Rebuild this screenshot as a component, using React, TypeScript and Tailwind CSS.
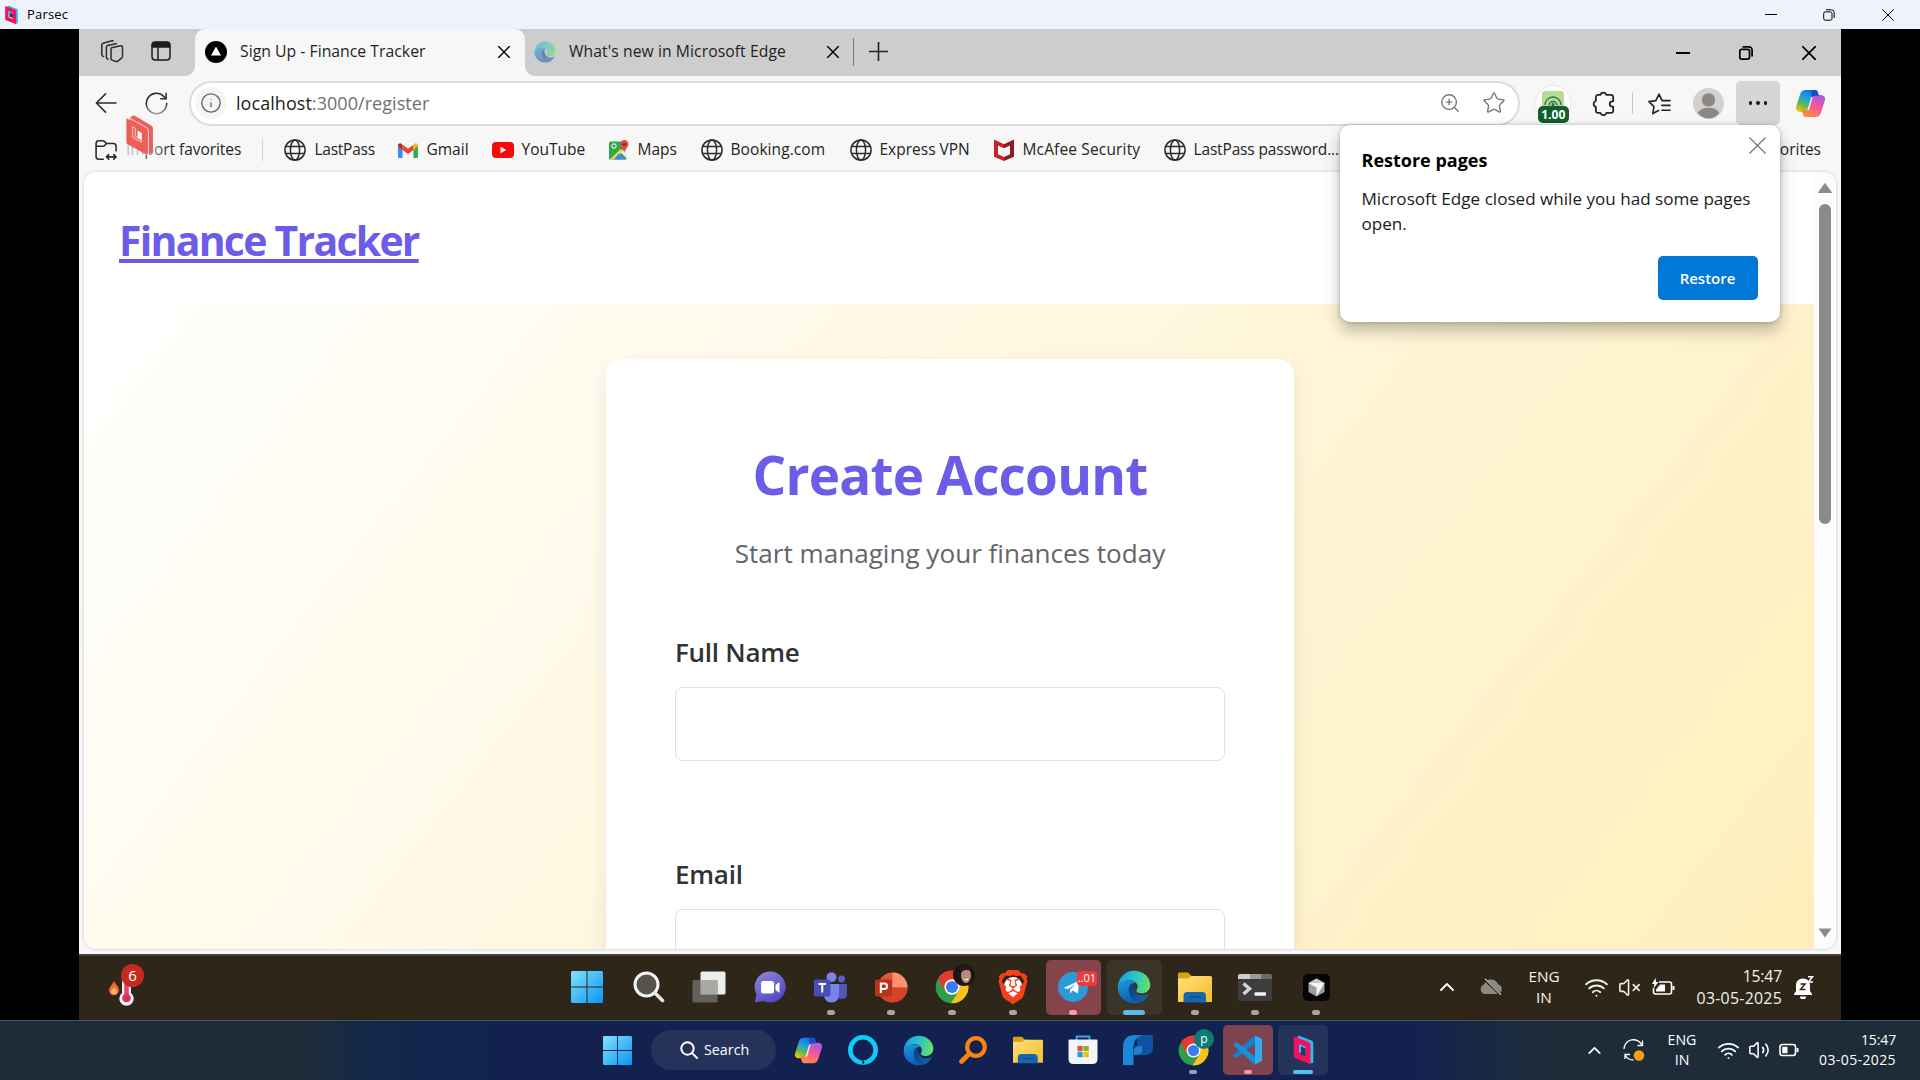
import React from 'react';
import { ChevronUp, Info, Star, Volume2, VolumeX, Wifi, ZoomIn } from 'lucide-react';
import { SiBrave } from 'react-icons/si';

type IconProps = { className?: string };

/* ---------- small line icons ---------- */

const Close = ({ className = '' }: IconProps) => (
  <svg viewBox="0 0 12 12" className={className} fill="none" stroke="currentColor" strokeLinecap="round">
    <path d="M.6.6l10.8 10.8M11.4.6L.6 11.4" />
  </svg>
);

const RestoreWindow = ({ className = '' }: IconProps) => (
  <svg viewBox="0 0 12 12" className={className} fill="none" stroke="currentColor">
    <rect x=".7" y="2.9" width="8.3" height="8.3" rx="1.6" />
    <path d="M3 .8h5.4a2.8 2.8 0 0 1 2.8 2.8V9" />
  </svg>
);

const Globe = ({ className = '' }: IconProps) => (
  <svg viewBox="0 0 24 24" className={className} fill="none" stroke="#2a2a2a" strokeWidth="1.6">
    <circle cx="12" cy="12" r="11" />
    <ellipse cx="12" cy="12" rx="5" ry="11" />
    <path d="M2 8.2h20M2 15.8h20" />
  </svg>
);

const Workspaces = ({ className = '' }: IconProps) => (
  <svg viewBox="0 0 24 24" className={className} fill="none" stroke="#2c2c2c" strokeWidth="1.5" strokeLinejoin="round">
    <path d="M11 10.2c0-.9.5-1.4 1.3-1.6l8.5-1.8c1-.2 1.7.4 1.7 1.4v9.2c0 .8-.3 1.3-1 1.8l-4 3.1c-.4.3-.9.4-1.4.2l-4-1.4c-.7-.3-1.1-.8-1.1-1.6z" />
    <path d="M8.5 20.5l-1.2-.6c-.6-.3-.9-.8-.9-1.5V8.200c0-.9.5-1.400 1.300-1.600l9.300-2.200" />
    <path d="M4 17.800l-1.300-.7c-.6-.3-.9-.8-.9-1.500V5.900c0-.9.500-1.400 1.300-1.600L12 1.800c.7-.2 1.200 0 1.500.5" />
  </svg>
);

const VerticalTabs = ({ className = '' }: IconProps) => (
  <svg viewBox="0 0 20 20" className={className} fill="none" stroke="#1d1d1d" strokeWidth="1.5">
    <rect x="1" y="1" width="18" height="18" rx="3.200" />
    <path d="M1.500 3.500Q1.500 1.500 4 1.500h12q2.500 0 2.500 2V6h-17z" fill="#1d1d1d" />
    <path d="M7 6v13" />
  </svg>
);

const Refresh = ({ className = '' }: IconProps) => (
  <svg viewBox="0 0 24 24" className={className} fill="none" strokeWidth="1.6" strokeLinecap="round">
    <defs>
      <linearGradient id="rfG" gradientUnits="userSpaceOnUse" x1="0" y1="0" x2="0" y2="24">
        <stop offset=".5" stopColor="#2d2d2d" />
        <stop offset="1" stopColor="#a8a8a8" />
      </linearGradient>
    </defs>
    <path d="M22.600 12a10.600 10.600 0 1 1-2.900-7.300l1.800 2" stroke="url(#rfG)" />
    <path d="M22 1.400v5.600h-5.600" stroke="#2d2d2d" />
  </svg>
);

const BackArrow = ({ className = '' }: IconProps) => (
  <svg viewBox="0 0 24 24" className={className} fill="none" stroke="#2d2d2d" strokeWidth="1.700" strokeLinecap="round" strokeLinejoin="round">
    <path d="M23 12H1.500M11.500 2L1.500 12l10 10" />
  </svg>
);

const ImportFolder = ({ className = '' }: IconProps) => (
  <svg viewBox="0 0 24 24" className={className} fill="none" stroke="#2a2a2a" strokeWidth="1.7" strokeLinecap="round" strokeLinejoin="round">
    <path d="M9 22H4.200A3 3 0 0 1 1.200 19V5a3 3 0 0 1 3-3h4.300c.8 0 1.500.3 2 .9L12.500 5H20a3 3 0 0 1 3 3v5" />
    <path d="M1.200 8h7.300c.8 0 1.500-.3 2-.9L12.500 5" />
    <path d="M12.500 19.500h10.500M15 17l-2.500 2.500L15 22M20.500 17l2.500 2.500-2.500 2.500" />
  </svg>
);

const PuzzlePiece = ({ className = '' }: IconProps) => (
  <svg viewBox="0 0 24 24" className={className} fill="none" stroke="#242424" strokeWidth="1.700" strokeLinejoin="round">
    <path d="M6.500 3.800H9a3 3 0 0 1 5.800 0h4.700a1.800 1.800 0 0 1 1.800 1.800v4.300h-.8a2.500 2.500 0 0 0 0 5h.8v4.300a1.800 1.800 0 0 1-1.800 1.800h-4.700a3 3 0 0 1-5.800 0H6.500a1.800 1.800 0 0 1-1.800-1.800v-4a2.900 2.900 0 0 1 0-5.600v-4a1.800 1.800 0 0 1 1.800-1.800z" />
  </svg>
);

const FavoritesList = ({ className = '' }: IconProps) => (
  <svg viewBox="0 0 24 24" className={className} fill="none" stroke="#242424" strokeWidth="1.700" strokeLinecap="round" strokeLinejoin="round">
    <path d="M11 19.300L5 22.500l1.200-7.300L1 10l7.200-1 3.300-6.800L14.700 9H23M14.500 14H23M14.500 19H23" />
  </svg>
);

/* ---------- coloured logos ---------- */

const Copilot = ({ className = '' }: IconProps) => (
  <svg viewBox="0 0 24 24" className={className}>
    <defs>
      <linearGradient id="cpA" x1=".7" y1="0" x2=".2" y2="1">
        <stop offset="0" stopColor="#1766dc" />
        <stop offset=".35" stopColor="#1a9be8" />
        <stop offset=".65" stopColor="#4fb860" />
        <stop offset="1" stopColor="#f0c500" />
      </linearGradient>
      <linearGradient id="cpB" x1=".8" y1="0" x2=".3" y2="1">
        <stop offset="0" stopColor="#a35be8" />
        <stop offset=".45" stopColor="#f0569a" />
        <stop offset="1" stopColor="#ff8a45" />
      </linearGradient>
    </defs>
    <path d="M8 1.500h7.500c1.200 0 1.900.7 2.200 1.800l1 3.700h-3c-1.400 0-2.200.8-2.600 2l-2.200 7.500c-.4 1.200-1.200 2-2.600 2H4.500C2 18.500.2 16.800.8 14.600L4.100 4.400C4.700 2.500 6.300 1.500 8 1.500z" fill="url(#cpA)" />
    <path d="M16 22.500H8.500c-1.200 0-1.900-.7-2.200-1.800l-1-3.700h3c1.400 0 2.200-.8 2.600-2l2.200-7.500c.4-1.200 1.200-2 2.600-2h3.800c2.500 0 4.300 1.700 3.700 3.900l-3.300 10.200c-.6 1.900-2.200 2.900-3.900 2.900z" fill="url(#cpB)" />
    <path d="M12.700 1.500h2.800c1.200 0 1.900.7 2.200 1.800L18.400 6h-2.900c-1.500 0-2.300.8-2.700 2z" fill="#154fc4" />
    <path d="M13.700 7L11 16.500q-.4 1.200-1.600 1.200L12.500 7z" fill="#fff" opacity=".85" />
  </svg>
);

const EdgeLogo = ({ className = '' }: IconProps) => (
  <svg viewBox="0 0 24 24" className={className}>
    <defs>
      <linearGradient id="edA" x1="0" y1=".4" x2="1" y2=".6">
        <stop offset="0" stopColor="#1b9fe0" />
        <stop offset=".5" stopColor="#2cc3c9" />
        <stop offset="1" stopColor="#66e35c" />
      </linearGradient>
      <linearGradient id="edB" x1="0" y1="0" x2=".4" y2="1">
        <stop offset="0" stopColor="#1c9bdf" />
        <stop offset="1" stopColor="#0c5eb4" />
      </linearGradient>
      <linearGradient id="edC" x1="0" y1=".3" x2="1" y2=".8">
        <stop offset="0" stopColor="#0d3f7d" />
        <stop offset="1" stopColor="#1766b5" />
      </linearGradient>
    </defs>
    <path d="M.6 12C.9 5.500 5.600.5 12 .5c6.800 0 11.500 4.800 11.500 10 0 3.500-2.700 5.900-6.200 5.900-2.200 0-3.600-.9-3.600-1.800 0-.6.900-1 .9-2.700 0-2.600-2.400-4.700-5.500-4.700C5.500 7.200 1.800 9 .6 12z" fill="url(#edA)" />
    <path d="M.5 12.200C1.200 9 4.600 7.200 8.600 7.200c2.100 0 3.800.7 4.900 1.800C10.500 9.300 8.600 11.200 8.600 14c0 4.200 3 7.500 6.800 8.900-1 .4-2.200.6-3.400.6C5.700 23.500.5 18.500.5 12.200z" fill="url(#edB)" />
    <path d="M8.300 14c0-2.300 1.300-4.300 3.300-5-.8 5 2.200 9 6.600 9 1.500 0 2.600-.4 3.600-1 .4-.2.700.1.500.5C20.500 20.600 18 23 15 23.100 11 22.500 8.300 18 8.300 14z" fill="url(#edC)" />
  </svg>
);

const ChromeLogo = ({ className = '' }: IconProps) => (
  <svg viewBox="0 0 24 24" className={className}>
    <circle cx="12" cy="12" r="11.500" fill="#2f9e4b" />
    <path d="M2 6.300a11.500 11.500 0 0 1 20.400.6H12l-5 7.600z" fill="#e33b2e" />
    <path d="M22.400 6.900A11.500 11.500 0 0 1 11.300 23.500L17 14.500 12 6.900z" fill="#fbc116" />
    <circle cx="12" cy="12" r="5.400" fill="#fff" />
    <circle cx="12" cy="12" r="4.300" fill="#3b7ded" />
  </svg>
);

const WindowsLogo = ({ className = '' }: IconProps) => (
  <svg viewBox="0 0 32 32" className={className}>
    <defs>
      <linearGradient id="winG" gradientUnits="userSpaceOnUse" x1="0" y1="0" x2="32" y2="32">
        <stop offset="0" stopColor="#7fe3fd" />
        <stop offset="1" stopColor="#0c93f5" />
      </linearGradient>
    </defs>
    <path d="M1.500 0H15.500V15.500H0V1.500Q0 0 1.500 0zM16.500 0H30.500Q32 0 32 1.500V15.500H16.500zM0 16.500H15.500V32H1.500Q0 32 0 30.500zM16.500 16.500H32V30.500Q32 32 30.500 32H16.500z" fill="url(#winG)" />
  </svg>
);

const Folder = ({ className = '' }: IconProps) => (
  <svg viewBox="0 0 34 31" className={className}>
    <defs>
      <linearGradient id="foG" x1="0" y1="0" x2="1" y2="1">
        <stop offset="0" stopColor="#ffe07a" />
        <stop offset="1" stopColor="#f5bd2b" />
      </linearGradient>
    </defs>
    <path d="M0 2Q0 .5 1.500.5H10l3.500 3.500H20v6H0z" fill="#dfa111" />
    <path d="M0 6.500h10L13.500 4H32.500Q34 4 34 5.500V30H0z" fill="url(#foG)" />
    <path d="M5.500 30.500V24q0-4 4-4h14.500q4 0 4 4v6.500z" fill="#1667b0" />
    <path d="M11 25h12" stroke="#0e4c87" strokeWidth="1.500" />
  </svg>
);

const ParsecMark = ({ className = '' }: IconProps) => (
  <svg viewBox="0 0 20 30" className={className}>
    <path d="M5 .5L18 5.500Q19.800 6.200 19.800 8V27.500L17 28.500 3 4z" fill="#35b8f0" />
    <path d="M1.500 1.700L15 7Q17 8 17 9.800V29.300L2 23.200Q.3 22.500.3 20.700V2.500Q.3 1.300 1.500 1.700zM5.500 9V18.500L12 21.300V12z" fill="#fb0d5c" fillRule="evenodd" />
    <path d="M5.500 9v9.500l2-1V12l4.500 2v-2z" fill="#35b8f0" />
    <path d="M7.500 11.500v6.200l4.500 2V13.500z" fill="#22347c" />
  </svg>
);

const ParsecOverlay = ({ className = '' }: IconProps) => (
  <svg viewBox="0 0 82 125" className={className}>
    <path d="M18 4Q23 0 28 3L78 33Q82 36 82 41V109Q82 114 78 116L68 122 10 9z" fill="#ee5f58" />
    <path d="M5 11.500L60 43Q64 45 64 50V122L5 89Q1 87 1 83V14Q1 9 5 11.500z" fill="#ee5f58" />
    <path d="M9 8.500L64 39.500Q68 42 68 47V123" fill="none" stroke="#fff" strokeWidth="2.400" />
    <path d="M20 36V68L47 83V76L28 65V40z" fill="none" stroke="#fff" strokeWidth="2" />
    <path d="M35 47L48 54.500V76L35 69z" fill="#fff" />
    <path d="M61.500 122v12" stroke="#444" strokeWidth="3" />
  </svg>
);

const GmailLogo = () => (
  <svg viewBox="0 0 24 18" className="h-[15px] w-[20px]">
    <path d="M0 2.500V16.500Q0 18 1.500 18H5.500V8z" fill="#4285f4" />
    <path d="M24 2.500V16.500Q24 18 22.500 18H18.500V8z" fill="#34a853" />
    <path d="M0 3V3.500l5.500 5V2.500L4 .8C2.300-.5 0 .7 0 3z" fill="#c5221f" />
    <path d="M24 3V3.500l-5.500 5V2.500L20 .8C21.700-.5 24 .7 24 3z" fill="#fbbc04" />
    <path d="M5.500 2v6.300L12 13.200l6.500-4.900V2L12 7z" fill="#ea4335" />
  </svg>
);

const YouTubeLogo = () => (
  <svg viewBox="0 0 22 16" className="h-[16px] w-[22px]">
    <rect width="22" height="16" rx="4" fill="#f8070b" />
    <path d="M8.500 4.700v6.600L14.300 8z" fill="#fff" />
  </svg>
);

const MapsLogo = () => (
  <svg viewBox="0 0 20 20" className="h-[20px] w-[20px]">
    <rect x="0" y="1.500" width="18" height="18" rx="1.500" fill="#2fa84f" />
    <path d="M18 7v11L11 11z" fill="#d8dbe0" />
    <path d="M1 19.500L11.500 9 14 11.500 5.500 19.500z" fill="#f8d24a" />
    <path d="M4.500 19.500L10 13.500l6.500 6z" fill="#4285f4" />
    <path d="M18 19V10l-6.500 2z" fill="#e8eaed" />
    <circle cx="5" cy="6" r="2.200" fill="none" stroke="#fff" strokeWidth="1" />
    <path d="M15.300 0a4.200 4.200 0 0 1 4.200 4.200c0 3-3 3.800-4.200 8.300-1.200-4.500-4.200-5.300-4.200-8.300A4.200 4.200 0 0 1 15.300 0z" fill="#dd4b3e" />
    <circle cx="15.300" cy="4.200" r="1.500" fill="#8c2018" />
  </svg>
);

const McAfeeLogo = () => (
  <svg viewBox="0 0 20 22" className="h-[22px] w-[20px]">
    <path d="M0 .5L10 5.200V9.300L4 6.500v8.800l6 2.800V22L0 17.800z" fill="#c8202f" />
    <path d="M20 .5L10 5.200V9.300l6-2.800v8.800l-6 2.800V22l10-4.200z" fill="#8e1b26" />
  </svg>
);

const SearchGlass = () => (
  <svg viewBox="0 0 32 32" className="size-[32px]" fill="none">
    <circle cx="13.500" cy="13.500" r="11.500" fill="#55534a" stroke="#f4f4f2" strokeWidth="3" />
    <path d="M22 22l7.500 7.500" stroke="#e6e6e4" strokeWidth="3.600" strokeLinecap="round" />
  </svg>
);

const TaskView = () => (
  <svg viewBox="0 0 34 32" className="h-[32px] w-[34px]">
    <rect x="8.500" y=".5" width="25" height="23" rx="1.500" fill="#ededeb" />
    <rect x=".5" y="9" width="25" height="22.500" rx="1.500" fill="#6f6e6a" fillOpacity=".82" />
    <rect x="8.500" y="9" width="17" height="14.500" fill="#a9a8a5" />
  </svg>
);

const ChatLogo = () => (
  <svg viewBox="0 0 32 32" className="size-[32px]">
    <defs>
      <linearGradient id="chG" x1="0" y1="0" x2=".6" y2="1">
        <stop offset="0" stopColor="#8e8ad8" />
        <stop offset="1" stopColor="#5148c4" />
      </linearGradient>
    </defs>
    <path d="M16 .5A15.500 15.500 0 1 1 9.500 30L.8 31.500 2.500 23.500A15.500 15.500 0 0 1 16 .5z" fill="url(#chG)" />
    <rect x="7" y="10" width="13" height="12.500" rx="2.500" fill="#fff" />
    <path d="M21.500 14l4-3v11l-4-3z" fill="#fff" />
  </svg>
);

const TeamsLogo = () => (
  <svg viewBox="0 0 33 31" className="h-[31px] w-[33px]">
    <circle cx="27.500" cy="7" r="3.500" fill="#5a60c8" />
    <path d="M23 12h10v10q0 5-5 5-3 0-5-2z" fill="#4f56bd" />
    <circle cx="17.500" cy="5.300" r="5" fill="#7d84e8" />
    <path d="M10 12h15v10q0 8.500-7.500 8.500T10 22z" fill="#7b83eb" />
    <rect x="0" y="7.500" width="16.500" height="17" rx="1.800" fill="#464eb8" />
    <path d="M4.500 12h7.500M8.250 12v8.500" stroke="#fff" strokeWidth="2" />
  </svg>
);

const PowerPointLogo = () => (
  <svg viewBox="0 0 33 31" className="h-[31px] w-[33px]">
    <circle cx="17.500" cy="15.500" r="15" fill="#e0583a" />
    <path d="M17.500.5a15 15 0 0 1 15 15h-15z" fill="#ff9070" />
    <path d="M2.500 15.500h30a15 15 0 0 1-30 0z" fill="#d2442a" />
    <rect x="0" y="7.500" width="17" height="17" rx="1.800" fill="#b9321a" />
    <path d="M5.800 21V11.500h3.500a2.700 2.700 0 0 1 0 5.500H5.800" stroke="#fff" strokeWidth="2" fill="none" />
  </svg>
);

const TelegramLogo = () => (
  <svg viewBox="0 0 30 30" className="size-[30px]">
    <circle cx="15" cy="15" r="15" fill="#2a9bd8" />
    <path d="M5.500 16L21 8.800 20 21.500 14.500 18.500 12 21.500V17.500L18 12 10 17z" fill="#fff" />
  </svg>
);

const TerminalLogo = () => (
  <svg viewBox="0 0 34 27" className="h-[27px] w-[34px]">
    <rect width="34" height="27" rx="2" fill="#3d3d3d" />
    <path d="M2 0h10v5H0V2Q0 0 2 0z" fill="#cfcfcf" />
    <path d="M12 0h11v5H12z" fill="#9a9a9a" />
    <path d="M23 0h9q2 0 2 2v3H23z" fill="#6c6c6c" />
    <path d="M5.500 9.500l6 5.300-6 5.300" stroke="#d6d6d6" strokeWidth="3.400" fill="none" />
    <rect x="16.500" y="18.300" width="11.500" height="3.400" rx=".8" fill="#f1f1f1" />
  </svg>
);

const CursorLogo = () => (
  <svg viewBox="0 0 27 27" className="size-[27px]">
    <rect width="27" height="27" rx="5" fill="#050505" />
    <path d="M13.500 4.500L21.500 9v9L13.500 22.500 5.500 18V9z" fill="#9c9c9c" />
    <path d="M13.500 4.500L21.500 9l-8 4.500L5.500 9z" fill="#c9c9c9" />
    <path d="M5.500 9h16L13.500 22.500v-9z" fill="#f4f4f4" />
  </svg>
);

const AlexaLogo = () => (
  <svg viewBox="0 0 30 30" className="size-[30px]" fill="none">
    <circle cx="15" cy="15" r="12.700" stroke="#0ecbfa" strokeWidth="4.600" />
    <path d="M13.500 24l1.500 6 1.500-3z" fill="#12234f" />
  </svg>
);

const OrangeSearch = () => (
  <svg viewBox="0 0 28 28" className="size-[28px]" fill="none" stroke="#fb8410">
    <circle cx="17" cy="11" r="8.800" strokeWidth="4.200" />
    <path d="M10 18l-7.500 7.500" strokeWidth="4.600" strokeLinecap="round" />
  </svg>
);

const StoreLogo = () => (
  <svg viewBox="0 0 30 30" className="size-[30px]">
    <path d="M8.500 6V1.500h13V6" fill="none" stroke="#39a7ea" strokeWidth="1.800" />
    <path d="M1.500 4.500h27q1 0 1 1V24q0 5-5 5h-19q-5 0-5-5V5.500q0-1 1-1z" fill="#f3f5f8" />
    <path d="M9.500 11h5.200v5.200H9.500z" fill="#e8502a" />
    <path d="M15.500 11h5.200v5.200h-5.200z" fill="#7db821" />
    <path d="M9.500 17h5.200v5.200H9.500z" fill="#1ba0e8" />
    <path d="M15.500 17h5.200v5.200h-5.200z" fill="#fbb813" />
  </svg>
);

const BlueLeafLogo = () => (
  <svg viewBox="0 0 30 30" className="size-[30px]">
    <path d="M14 0H30V12Q30 20 22 20H14z" fill="#0d53a2" />
    <path d="M0 30V12Q0 0 12 0H19Q11 3 10.500 12V30z" fill="#1c86da" />
    <path d="M10.500 20V16.500Q10.500 10.500 16.500 10.500H20V14Q20 20 14 20z" fill="#1f7fd0" stroke="#0d4b92" strokeWidth=".8" />
  </svg>
);

const VSCodeLogo = () => (
  <svg viewBox="0 0 30 30" className="size-[30px]">
    <path d="M21.500.5L22.500 8 3.500 23.200 0 20.300z" fill="#1482cc" />
    <path d="M21.500 29.500L22.500 22 3.500 7 0 9.800z" fill="#1b8ed8" />
    <path d="M22 .5L29 3.800V26L22 29.500z" fill="#32a9f0" />
  </svg>
);

const Weather = () => (
  <svg viewBox="0 0 38 42" className="h-[42px] w-[38px]">
    <path d="M6 15c1 3 5 5 5 9a5 5 0 0 1-10 0.500C1 21 4 19.500 6 15z" fill="#ef6a2f" />
    <path d="M6.500 21c.5 1.500 2.500 2.500 2.500 4.500a3 3 0 0 1-6 0C3 23.500 5.500 23 6.500 21z" fill="#ffb45a" />
    <path d="M14 12h9v15a7.200 7.200 0 1 1-9 0z" fill="#f1edf8" />
    <path d="M18.500 12v18" stroke="#e2436f" strokeWidth="4.500" />
    <circle cx="18.500" cy="32" r="4.300" fill="#d92f5f" />
  </svg>
);

const CloudOff = () => (
  <svg viewBox="0 0 24 18" className="h-[18px] w-[24px]">
    <path d="M5.500 16A5 5 0 0 1 5 6.500 7.500 7.500 0 0 1 19 6.300 5 5 0 0 1 19 16z" fill="#8c8a83" />
    <path d="M5 1l17 16" stroke="#2e2719" strokeWidth="2.600" />
    <path d="M6 .8l16 16" stroke="#b9b7b0" strokeWidth="1.300" />
  </svg>
);

const SleepBell = () => (
  <svg viewBox="0 0 20 24" className="h-[24px] w-[20px]">
    <path d="M9 3.500c4.500 0 7 3 7 7V16l2 3v1H0v-1l2-3v-5.500c0-4 2.500-7 7-7z" fill="#fff" />
    <path d="M6 21.500h6a3 3 0 0 1-6 0z" fill="#fff" />
    <path d="M6.500 9h4.500l-4.500 5.500h5" stroke="#2e2719" strokeWidth="1.500" fill="none" />
    <path d="M14 1.700h4.500L14.500 7H19" stroke="#fff" strokeWidth="1.500" fill="none" />
  </svg>
);

const ChargingBattery = () => (
  <svg viewBox="0 0 24 18" className="h-[18px] w-[24px]" fill="none" stroke="#fff" strokeWidth="1.600">
    <path d="M8 4h10.500q2 0 2 2v8q0 2-2 2h-14q-2 0-2-2V10" />
    <path d="M5 11.500L9 6.500h5v7H5z" fill="#fff" stroke="none" />
    <path d="M22.500 8v4" strokeWidth="2" />
    <path d="M4.500 0L1 6h2.500L2.500 10.500 7.500 4H5z" fill="#fff" stroke="none" />
  </svg>
);

const HalfBattery = () => (
  <svg viewBox="0 0 20 14" className="h-[14px] w-[20px]" fill="none" stroke="#fff" strokeWidth="1.600">
    <rect x="1" y="1.500" width="15.500" height="11" rx="2.500" />
    <rect x="3.200" y="3.800" width="5.300" height="6.400" rx=".8" fill="#fff" stroke="none" />
    <path d="M18.500 5v4" strokeWidth="2" />
  </svg>
);

const SyncAlert = () => (
  <svg viewBox="0 0 22 22" className="size-[22px]" fill="none" stroke="#fff" strokeWidth="1.300">
    <path d="M1 10A9.500 9.500 0 0 1 19 6M19.500 1.500V6.500H14.500" />
    <path d="M2 20V15.500h5M2 16q3 5 8.500 5" />
    <circle cx="16" cy="16.500" r="5.200" fill="#ff9d0a" stroke="none" />
  </svg>
);

/* ---------- shared pieces ---------- */

function Bookmark({ icon, label, width, gap }: { icon: React.ReactNode; label: string; width: string; gap: string }) {
  return (
    <div className={`flex shrink-0 items-center whitespace-nowrap ${width}`}>
      <span className={`flex shrink-0 items-center ${gap}`}>{icon}</span>
      <span className="-mt-px">{label}</span>
    </div>
  );
}

function RemoteApp({ children, tile = '', pill = '' }: { children: React.ReactNode; tile?: string; pill?: string }) {
  return (
    <div className="flex h-full w-[60.7px] shrink-0 items-center justify-center">
      <div className={`relative flex h-[55px] w-[55px] items-center justify-center rounded-[5px] ${tile}`}>
        {children}
        {pill && <span className={`absolute bottom-0 h-[5px] rounded-full ${pill}`} />}
      </div>
    </div>
  );
}

function HostApp({ children, tile = '', pill = '' }: { children: React.ReactNode; tile?: string; pill?: string }) {
  return (
    <div className="flex h-full w-[55px] shrink-0 items-center justify-center">
      <div className={`relative flex h-[50px] w-[50px] items-center justify-center rounded-[5px] ${tile}`}>
        {children}
        {pill && <span className={`absolute bottom-[1px] h-[4px] rounded-full ${pill}`} />}
      </div>
    </div>
  );
}

function Field({ label, className = '' }: { label: string; className?: string }) {
  return (
    <div className={className}>
      <div className="text-[26px] leading-[36px] font-semibold tracking-[-0.250px] text-[#2d3436]">{label}</div>
      <div className="mt-[17px] h-[74px] rounded-[8px] border border-[#dfe1e3] bg-white" />
    </div>
  );
}

/* ---------- screen sections ---------- */

function TitleBar() {
  return (
    <div className="flex h-[29px] items-center bg-[#eef2fb] text-black">
      <ParsecMark className="ml-[5px] h-[20px] w-[13px]" />
      <span className="ml-[9px] text-[13px] tracking-[0.200px]">Parsec</span>
      <div className="mr-[26px] ml-auto flex items-center">
        <span className="h-px w-[12px] bg-black" />
        <RestoreWindow className="ml-[46px] size-[12px]" />
        <Close className="ml-[47px] size-[12px]" />
      </div>
    </div>
  );
}

function TabStrip() {
  return (
    <div className="flex h-[47px] bg-[#f7f7f7]">
      <div className="flex w-[115.500px] items-center rounded-br-[10px] bg-[#cdcdcd] pb-[3px]">
        <Workspaces className="ml-[21px] size-[24px]" />
        <VerticalTabs className="ml-[27px] size-[20px]" />
      </div>
      <div className="w-[330px] bg-[#cdcdcd]">
        <div className="flex h-full items-center rounded-t-[10px] bg-[#f7f7f7] pb-[2px]">
          <svg viewBox="0 0 22 22" className="ml-[10px] size-[22px]">
            <circle cx="11" cy="11" r="11" fill="#000" />
            <path d="M11 5.500l5 9H6z" fill="#fff" />
          </svg>
          <span className="ml-[13.500px] text-[15.800px] text-[#1f1f1f]">Sign Up - Finance Tracker</span>
          <Close className="mr-[15px] ml-auto size-[12px] stroke-[1.4]" />
        </div>
      </div>
      <div className="flex flex-1 items-center rounded-bl-[10px] bg-[#cdcdcd] pb-[2px]">
        <EdgeLogo className="ml-[9px] size-[22px] opacity-50" />
        <span className="ml-[13.500px] w-[257.500px] text-[15.700px] tracking-[0.080px] text-[#1f1f1f]">What's new in Microsoft Edge</span>
        <Close className="size-[12px] stroke-[1.4]" />
        <span className="ml-[14px] h-[28px] w-px bg-[#7c7c7c]" />
        <svg viewBox="0 0 20 20" className="ml-[15px] size-[19px]" stroke="#222" strokeWidth="1.700">
          <path d="M10 0v20M0 10h20" />
        </svg>
        <div className="mr-[25px] ml-auto flex items-center pt-[2px] text-black">
          <span className="h-[2px] w-[14px] bg-black" />
          <RestoreWindow className="ml-[49px] size-[14px] stroke-[1.5]" />
          <Close className="ml-[49px] size-[14px] stroke-[1.5]" />
        </div>
      </div>
    </div>
  );
}

function Toolbar() {
  return (
    <div className="flex h-[54px] items-center bg-[#f7f7f7]">
      <BackArrow className="ml-[16px] size-[22px]" />
      <Refresh className="ml-[27.500px] size-[23px]" />
      <div className="ml-[21.500px] flex h-[45px] w-[1331px] items-center rounded-full border-2 border-[#dcdcdc] bg-white">
        <span className="ml-[4px] flex size-[32px] items-center justify-center rounded-full bg-[#f5f5f5]">
          <Info className="size-[22px] stroke-[1.5] text-[#666]" />
        </span>
        <span className="ml-[9px] text-[18px] tracking-[0.050px] text-[#707070]">
          <span className="text-[#1c1c1c]">localhost</span>:3000/register
        </span>
        <ZoomIn className="ml-auto size-[22px] stroke-[1.5] text-[#777]" />
        <Star className="mr-[12px] ml-[21px] size-[24px] stroke-[1.4] text-[#777]" />
      </div>
      <div className="relative ml-[16px] size-[34px] rounded-full bg-white shadow-[0_0_2px_#ccc]">
        <svg viewBox="0 0 22 22" className="absolute top-[5px] left-[6px] size-[22px]">
          <rect width="22" height="22" rx="3" fill="#b5dc94" />
          <path d="M3 14a8 8 0 0 1 16 0M7 14.500a4 4 0 0 1 8 0" fill="none" stroke="#2d6b4f" strokeWidth="1.300" />
          <circle cx="11" cy="13.500" r="1.500" fill="#2d6b4f" />
        </svg>
        <span className="absolute top-[20px] left-[2px] flex h-[17px] w-[30.500px] items-center justify-center rounded-[5px] bg-[#0e5f2b] text-[12px] font-bold text-white">
          1.00
        </span>
      </div>
      <PuzzlePiece className="ml-[21px] size-[25px]" />
      <span className="ml-[16px] h-[22px] w-px bg-[#c9c9c9]" />
      <FavoritesList className="ml-[15px] size-[23px]" />
      <svg viewBox="0 0 30 30" className="ml-[22px] size-[31px]">
        <circle cx="15" cy="15" r="15" fill="#d3d1cf" />
        <circle cx="15" cy="11.500" r="6.500" fill="#8b8784" />
        <path d="M4.500 24q3-5 10.500-5t10.500 5q-4 5.500-10.500 5.500T4.500 24z" fill="#8b8784" />
      </svg>
      <div className="ml-[12px] flex h-[44px] w-[44px] items-center justify-center gap-[4px] rounded-[5px] bg-[#d6d6d6]">
        <span className="size-[3.500px] rounded-full bg-[#1a1a1a]" />
        <span className="size-[3.500px] rounded-full bg-[#1a1a1a]" />
        <span className="size-[3.500px] rounded-full bg-[#1a1a1a]" />
      </div>
      <Copilot className="ml-[15px] size-[31px]" />
    </div>
  );
}

function BookmarksBar() {
  const globe = <Globe className="size-[22px]" />;
  return (
    <div className="flex h-[42px] items-center overflow-hidden bg-[#f7f7f7] pb-[2px] pl-[16px] text-[15.500px] text-[#242424]">
      <Bookmark icon={<ImportFolder className="size-[22px]" />} label="Import favorites" width="w-[167px] tracking-[-0.050px]" gap="w-[31px]" />
      <span className="mr-[20.500px] h-[22px] w-px shrink-0 bg-[#d2d2d2]" />
      <Bookmark icon={globe} label="LastPass" width="w-[114px] tracking-[-0.250px]" gap="w-[31px]" />
      <Bookmark icon={<GmailLogo />} label="Gmail" width="w-[94px]" gap="w-[29px]" />
      <Bookmark icon={<YouTubeLogo />} label="YouTube" width="w-[117px]" gap="w-[30px]" />
      <Bookmark icon={<MapsLogo />} label="Maps" width="w-[92px]" gap="w-[29px]" />
      <Bookmark icon={globe} label="Booking.com" width="w-[149px] tracking-[0.080px]" gap="w-[30px]" />
      <Bookmark icon={globe} label="Express VPN" width="w-[144px]" gap="w-[30px]" />
      <Bookmark icon={<McAfeeLogo />} label="McAfee Security" width="w-[170px] tracking-[0.150px]" gap="w-[29px]" />
      <Bookmark icon={globe} label="LastPass password..." width="w-[180px] tracking-[-0.160px]" gap="w-[30px]" />
      <span className="mr-[20px] ml-auto whitespace-nowrap">orites</span>
    </div>
  );
}

function WebPage() {
  return (
    <div className="h-[782px] bg-[#f7f7f7] px-[5px] pb-[5px]">
      <div className="flex h-full overflow-hidden rounded-[12px] bg-white shadow-[0_0_3px_rgba(0,0,0,0.22)]">
        <div className="flex w-[1730px] flex-col overflow-hidden">
          <div className="flex h-[132px] shrink-0 items-center bg-white pt-[4px] pl-[35px]">
            <span className="text-[41px] leading-[56px] font-bold tracking-[-1.760px] text-[#6c5ce7] underline decoration-[3.500px] underline-offset-[3px]">
              Finance Tracker
            </span>
          </div>
          <div className="flex h-[1500px] shrink-0 justify-center bg-[linear-gradient(128deg,#ffffff_0%,#ffeaa7_100%)] pt-[55px] pl-[2px]">
            <div className="h-[1300px] w-[688px] rounded-[16px] bg-white px-[69px] pt-[84px] shadow-[0_8px_22px_rgba(0,0,0,0.08)]">
              <h1 className="text-center text-[53px] leading-[64px] font-bold tracking-[-0.770px] whitespace-nowrap text-[#6c5ce7]">Create Account</h1>
              <p className="mt-[26px] text-center text-[26.100px] leading-[40px] whitespace-nowrap text-[#636669]">Start managing your finances today</p>
              <Field label="Full Name" className="mt-[61px]" />
              <Field label="Email" className="mt-[95px]" />
            </div>
          </div>
        </div>
        <div className="flex w-[21px] flex-col items-center bg-[#fcfcfc] pt-[11px] pb-[11px]">
          <svg viewBox="0 0 14 9" className="h-[10px] w-[14px]">
            <path d="M7 0l6.500 9H.5z" fill="#8a8a8a" stroke="#8a8a8a" strokeLinejoin="round" />
          </svg>
          <div className="mt-[11px] h-[320px] w-[12px] rounded-full bg-[#8a8a8a]" />
          <svg viewBox="0 0 14 9" className="mt-auto h-[10px] w-[14px]">
            <path d="M7 9L.5 0h13z" fill="#8a8a8a" />
          </svg>
        </div>
      </div>
    </div>
  );
}

function RestorePopup() {
  return (
    <div className="absolute top-[96px] left-[1261px] flex h-[197px] w-[440px] flex-col rounded-[10px] bg-white pt-[22px] pr-[22.500px] pl-[21.500px] shadow-[0_9px_16px_rgba(0,0,0,0.25),0_0_4px_rgba(0,0,0,0.22)]">
      <Close className="absolute top-[12px] right-[14px] size-[17px] text-[#666] stroke-[0.9]" />
      <div className="text-[18px] leading-[26px] font-bold whitespace-nowrap text-black">Restore pages</div>
      <div className="mt-[13px] text-[17.100px] leading-[25px] text-[#1b1b1b]">
        Microsoft Edge closed while you had some pages
        <br />
        open.
      </div>
      <div className="mt-[20px] flex h-[44px] w-[100px] items-center justify-center self-end rounded-[5px] bg-[#0078d7] text-[15px] font-semibold text-white">
        Restore
      </div>
    </div>
  );
}

function RemoteTaskbar() {
  return (
    <div className="flex h-[66px] items-center border-t-2 border-[#45433c] bg-[#2e2719] pb-[2px] text-[#f3f1ec]">
      <div className="relative w-[477.500px] shrink-0">
        <div className="ml-[29px] flex">
          <Weather />
        </div>
        <span className="absolute -top-[2px] left-[42px] flex size-[23px] items-center justify-center rounded-full bg-[#c42b1c] text-[15px] text-white">6</span>
      </div>
      <RemoteApp><WindowsLogo className="size-[32px]" /></RemoteApp>
      <div className="w-px shrink-0" />
      <RemoteApp><SearchGlass /></RemoteApp>
      <RemoteApp><TaskView /></RemoteApp>
      <RemoteApp><ChatLogo /></RemoteApp>
      <RemoteApp pill="w-[8px] bg-[#a9a69c]"><TeamsLogo /></RemoteApp>
      <RemoteApp pill="w-[8px] bg-[#a9a69c]"><PowerPointLogo /></RemoteApp>
      <RemoteApp pill="w-[8px] bg-[#a9a69c]">
        <ChromeLogo className="size-[34px]" />
        <svg viewBox="0 0 22 22" className="absolute top-[4px] right-[4px] size-[22px]">
          <circle cx="11" cy="11" r="11" fill="#1d1414" />
          <ellipse cx="13" cy="11.500" rx="5" ry="7.500" fill="#b98c7a" />
          <path d="M8 9q3-5 10-2V4Q12 0 7 4z" fill="#2a1b1a" />
          <path d="M11.500 15q2 1.500 3.500 0" stroke="#fff" strokeWidth="1.200" fill="none" />
        </svg>
      </RemoteApp>
      <RemoteApp pill="w-[8px] bg-[#a9a69c]">
        <span className="relative flex h-[34px] w-[30px] items-center justify-center">
          <span className="absolute h-[20px] w-[18px] rounded-full bg-white" />
          <SiBrave className="relative size-[34px] shrink-0 text-[#f4401c]" />
        </span>
      </RemoteApp>
      <RemoteApp tile="bg-[#85444b]" pill="w-[8px] bg-[#ff97a8]">
        <TelegramLogo />
        <span className="absolute top-[11px] right-[4px] flex h-[15px] w-[20px] items-center justify-center rounded-[4px] bg-[#ea3c3c] text-[11px] text-white">..01</span>
      </RemoteApp>
      <RemoteApp tile="bg-[#3b3529]" pill="w-[22px] bg-[#5cb9ee]"><EdgeLogo className="size-[34px]" /></RemoteApp>
      <RemoteApp pill="w-[8px] bg-[#a9a69c]"><Folder className="h-[31px] w-[34px]" /></RemoteApp>
      <RemoteApp pill="w-[8px] bg-[#a9a69c]"><TerminalLogo /></RemoteApp>
      <RemoteApp pill="w-[8px] bg-[#a9a69c]"><CursorLogo /></RemoteApp>
      <div className="mr-[27px] ml-auto flex items-center">
        <ChevronUp className="size-[24px] stroke-2" />
        <span className="ml-[20px] flex"><CloudOff /></span>
        <div className="ml-[21px] w-[40px] text-center text-[15.300px] leading-[21px]">
          ENG
          <br />
          IN
        </div>
        <Wifi className="ml-[20px] size-[25px] stroke-[1.900]" />
        <VolumeX className="ml-[9px] size-[23px] stroke-[1.700]" />
        <span className="ml-[10px] flex"><ChargingBattery /></span>
        <div className="w-[107px] text-right leading-[22px]">
          <div className="text-[15.700px] tracking-[-0.150px]">15:47</div>
          <div className="text-[15.900px] tracking-[0.250px]">03-05-2025</div>
        </div>
        <span className="ml-[12px] flex"><SleepBell /></span>
      </div>
    </div>
  );
}

function HostTaskbar() {
  return (
    <div className="flex h-[60px] items-center border-t border-[#46525c] bg-[linear-gradient(90deg,#1e2b38_0px,#1e2b38_310px,#13284b_370px,#12214f_520px,#12214f_1410px,#1a2a40_1500px,#1e2b38_1560px)] pb-px text-white">
      <div className="w-[590px] shrink-0" />
      <HostApp><WindowsLogo className="size-[29px]" /></HostApp>
      <div className="ml-[6px] flex h-[40px] w-[125px] items-center rounded-full bg-[#25335a] text-[14.300px]">
        <svg viewBox="0 0 18 18" className="ml-[29px] size-[18px]" fill="none" stroke="#fff" strokeWidth="2" strokeLinecap="round">
          <circle cx="7.500" cy="7.500" r="6.200" />
          <path d="M12 12l5 5" />
        </svg>
        <span className="ml-[6px]">Search</span>
      </div>
      <div className="w-[4.500px] shrink-0" />
      <HostApp><Copilot className="size-[29px]" /></HostApp>
      <HostApp><AlexaLogo /></HostApp>
      <HostApp><EdgeLogo className="size-[31px]" /></HostApp>
      <HostApp><OrangeSearch /></HostApp>
      <HostApp><Folder className="h-[28px] w-[30px]" /></HostApp>
      <HostApp><StoreLogo /></HostApp>
      <HostApp><BlueLeafLogo /></HostApp>
      <HostApp pill="w-[8px] bg-[#9aa3b5]">
        <ChromeLogo className="size-[31px]" />
        <span className="absolute top-[4px] right-[4px] flex size-[20px] items-center justify-center rounded-full bg-[#0d7c72] text-[12px] leading-none">p</span>
      </HostApp>
      <HostApp tile="bg-[#7d4450]" pill="w-[8px] bg-[#ff97a8]"><VSCodeLogo /></HostApp>
      <HostApp tile="bg-[#24335a]" pill="w-[20px] bg-[#57bff3]"><ParsecMark className="h-[30px] w-[21px]" /></HostApp>
      <div className="mr-[24px] ml-auto flex items-center">
        <ChevronUp className="size-[21px] stroke-2" />
        <span className="ml-[18px] flex"><SyncAlert /></span>
        <div className="ml-[17px] w-[40px] text-center text-[14.200px] leading-[20px]">
          ENG
          <br />
          IN
        </div>
        <Wifi className="ml-[15px] size-[23px] stroke-[1.900]" />
        <Volume2 className="ml-[8px] size-[22px] stroke-[1.700]" />
        <span className="ml-[9px] flex"><HalfBattery /></span>
        <div className="w-[97px] text-right text-[14px] leading-[20px]">
          <div className="tracking-[-0.140px]">15:47</div>
          <div className="tracking-[0.390px]">03-05-2025</div>
        </div>
      </div>
    </div>
  );
}

export default function App() {
  return (
    <div className="flex h-[1080px] w-[1920px] flex-col overflow-hidden bg-black font-['Open_Sans','Noto_Sans',sans-serif]">
      <TitleBar />
      <div className="flex h-[991px] pl-[79px]">
        <div className="relative flex h-full w-[1762px] flex-col">
          <TabStrip />
          <Toolbar />
          <BookmarksBar />
          <WebPage />
          <RemoteTaskbar />
          <RestorePopup />
          <span className="absolute top-[108px] left-[46px] h-[26px] w-[44px] bg-[linear-gradient(90deg,rgba(247,247,247,0.7)_50%,rgba(247,247,247,0)_100%)]" />
          <ParsecOverlay className="absolute top-[86px] left-[47px] h-[41px] w-[27px] overflow-visible" />
        </div>
      </div>
      <HostTaskbar />
    </div>
  );
}
